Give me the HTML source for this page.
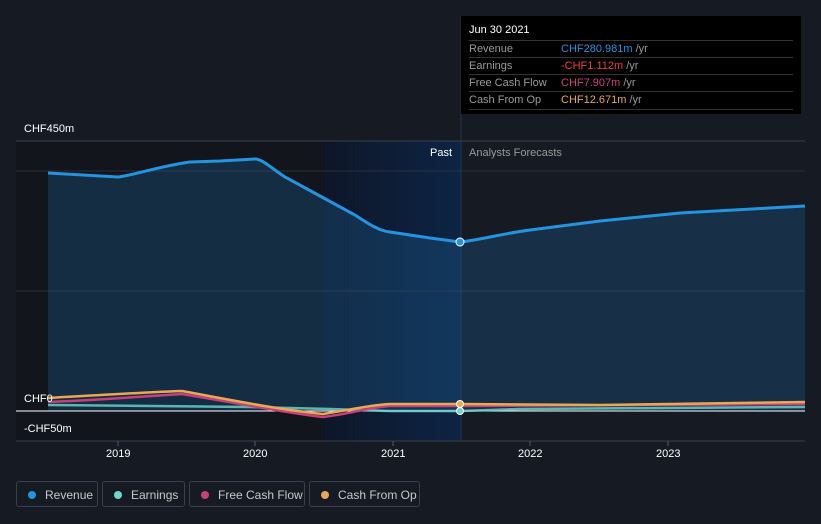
<!DOCTYPE html>
<html><head><style>
body{margin:0;width:821px;height:524px;background:#151a23;font-family:"Liberation Sans",sans-serif;overflow:hidden;position:relative}
.t{position:absolute;color:#fff;font-size:11px}
.tip{position:absolute;left:461px;top:16px;width:340px;height:98px;background:#000;}
.tip .r{position:absolute;left:8px;right:8px;height:17px;border-top:1px solid #333;font-size:11px;color:#9a9a9a;line-height:17px}
.tip .r b{font-weight:normal;position:absolute;left:92px}
.leg{position:absolute;top:481px;height:26px;border:1px solid #3a3f4a;border-radius:3px;color:#c8c8c8;font-size:12px;line-height:26px;box-sizing:border-box}
.leg i{position:absolute;left:11px;top:9px;width:8px;height:8px;border-radius:50%}
.leg span{position:absolute;left:28px}
</style></head><body>
<svg width="821" height="524" style="position:absolute;left:0;top:0">
<defs><linearGradient id="pg" x1="0" x2="1"><stop offset="0" stop-color="#0e1628"/><stop offset="1" stop-color="#0d2444"/></linearGradient></defs>
<rect x="16" y="141" width="307" height="300" fill="#12151c"/>
<rect x="323" y="141" width="138" height="300" fill="url(#pg)"/>
<line x1="16" y1="141" x2="805" y2="141" stroke="#3a3f4a"/>
<line x1="16" y1="171" x2="805" y2="171" stroke="#2a303b"/>
<line x1="16" y1="291" x2="805" y2="291" stroke="#2a303b"/>
<line x1="16" y1="441" x2="805" y2="441" stroke="#3a3f4a"/>
<line x1="461" y1="16" x2="461" y2="441" stroke="#24344d"/>
<path d="M48,173 L118,177 C135,175 160,166 190,162 L220,161 L255,159 C262,159 270,167 285,177 L320,196 L355,215 C370,225 380,231 390,232 L430,238 L460,242 C480,240 500,234 530,230 L600,221 L680,213 L805,206 L805,411 L48,411Z" fill="#1c5d8c" fill-opacity="0.35"/>
<path d="M48,173 L118,177 C135,175 160,166 190,162 L220,161 L255,159 C262,159 270,167 285,177 L320,196 L355,215 C370,225 380,231 390,232 L430,238 L460,242 C480,240 500,234 530,230 L600,221 L680,213 L805,206" fill="none" stroke="#2394e0" stroke-width="3"/>
<line x1="16" y1="411" x2="805" y2="411" stroke="#fff"/>
<path d="M48,405 L250,407 L330,409 L390,411 L461,411 L520,409 L805,407" fill="none" stroke="#6ed8cc" stroke-width="2.5" opacity="0.8"/>
<path d="M48,402 C100,400 150,396 182,394 C220,400 280,412 323,417 C350,414 370,407 390,406 L461,406 L805,404" fill="none" stroke="#c8407a" stroke-width="2.5"/>
<path d="M48,398 C100,395 150,392 182,391 C220,398 280,410 323,414 C350,410 370,405 390,404 L461,404 L600,405 L805,402" fill="none" stroke="#e8a955" stroke-width="2.5"/>
<circle cx="460" cy="242" r="4" fill="#2394e0" stroke="#fff" stroke-width="1"/>
<circle cx="460" cy="411" r="3.5" fill="#6ed8cc" stroke="#fff" stroke-width="1"/>
<circle cx="460" cy="404" r="3.5" fill="#e8a955" stroke="#fff" stroke-width="1"/>
<g stroke="#555b66"><line x1="118" y1="441" x2="118" y2="446"/><line x1="255" y1="441" x2="255" y2="446"/><line x1="393" y1="441" x2="393" y2="446"/><line x1="530" y1="441" x2="530" y2="446"/><line x1="668" y1="441" x2="668" y2="446"/></g>
</svg>
<div class="t" style="left:24px;top:123px">CHF450m</div>
<div class="t" style="left:24px;top:393px">CHF0</div>
<div class="t" style="left:24px;top:423px">-CHF50m</div>
<div class="t" style="left:430px;top:147px">Past</div>
<div class="t" style="left:469px;top:147px;color:#9a9a9a">Analysts Forecasts</div>
<div class="t" style="left:106px;top:448px">2019</div>
<div class="t" style="left:243px;top:448px">2020</div>
<div class="t" style="left:381px;top:448px">2021</div>
<div class="t" style="left:518px;top:448px">2022</div>
<div class="t" style="left:656px;top:448px">2023</div>
<div class="tip">
<div style="position:absolute;left:8px;top:8px;color:#fff;font-size:11px">Jun 30 2021</div>
<div class="r" style="top:24px">Revenue<b style="color:#2394e0">CHF280.981m <span style="color:#9a9a9a">/yr</span></b></div>
<div class="r" style="top:41px">Earnings<b style="color:#f03c3c">-CHF1.112m <span style="color:#9a9a9a">/yr</span></b></div>
<div class="r" style="top:58px">Free Cash Flow<b style="color:#d0407f">CHF7.907m <span style="color:#9a9a9a">/yr</span></b></div>
<div class="r" style="top:75px">Cash From Op<b style="color:#e8a955">CHF12.671m <span style="color:#9a9a9a">/yr</span></b></div>
<div style="position:absolute;left:8px;right:8px;top:93px;border-top:1px solid #333"></div>
</div>
<div class="leg" style="left:16px;width:82px"><i style="background:#2394e0"></i><span>Revenue</span></div>
<div class="leg" style="left:102px;width:83px"><i style="background:#6ed8cc"></i><span>Earnings</span></div>
<div class="leg" style="left:189px;width:116px"><i style="background:#c8407a"></i><span>Free Cash Flow</span></div>
<div class="leg" style="left:309px;width:111px"><i style="background:#e8a955"></i><span>Cash From Op</span></div>
</body></html>
